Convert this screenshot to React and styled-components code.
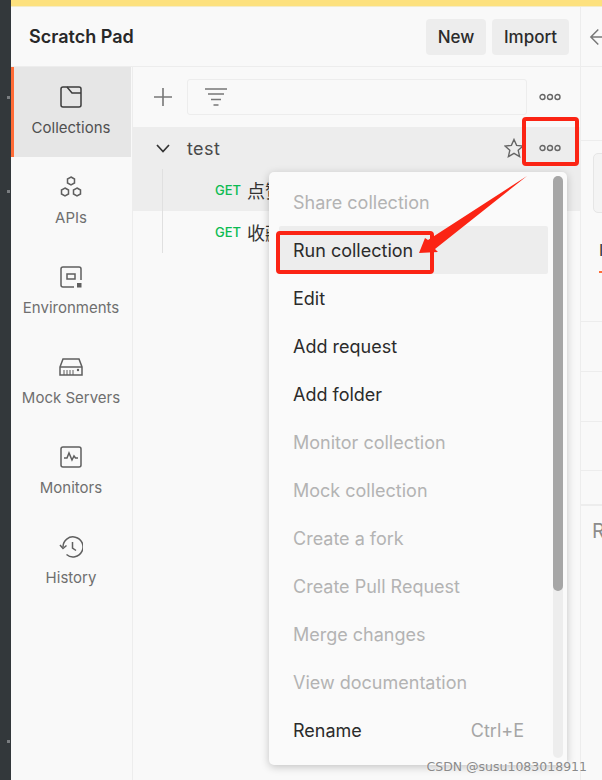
import React from "react";
import styled, { createGlobalStyle } from "styled-components";

const GlobalStyle = createGlobalStyle`
  html, body { margin: 0; padding: 0; background: #f9f9f9; }
  * { box-sizing: border-box; }
`;

const Page = styled.div`
  position: relative;
  width: 602px;
  height: 780px;
  overflow: hidden;
  display: grid;
  grid-template-columns: 11px 1fr;
  background: #f9f9f9;
  font-family: Inter, "Noto Sans CJK SC", sans-serif;
`;

const DarkStrip = styled.div`
  background: #33383b;
  position: relative;
`;

const StripTick = styled.span`
  position: absolute;
  left: 7px;
  top: ${(p) => p.$top}px;
  width: 3px;
  height: 3px;
  background: #7a7d80;
`;

const Main = styled.div`
  display: flex;
  flex-direction: column;
  min-width: 0;
`;

const Banner = styled.div`
  height: 7px;
  background: #fde17e;
  border-bottom: 1px solid #f4ecc8;
  flex: none;
`;

const Workspace = styled.div`
  flex: 1;
  display: grid;
  grid-template-columns: 570px 1fr;
  min-height: 0;
`;

const Sidebar = styled.div`
  display: flex;
  flex-direction: column;
  border-right: 1px solid #ededed;
`;

const Header = styled.div`
  height: 60px;
  flex: none;
  display: flex;
  align-items: center;
  padding: 0 11px 0 18px;
  gap: 6px;
  border-bottom: 1px solid #ededed;
`;

const Title = styled.div`
  font-size: 18px;
  font-weight: 600;
  color: #282828;
  margin-right: auto;
`;

const HeaderButton = styled.div`
  height: 36px;
  width: ${(p) => p.$width}px;
  display: flex;
  align-items: center;
  justify-content: center;
  border-radius: 4px;
  background: #ededed;
  color: #2b2b2b;
  font-size: 17px;
  font-weight: 500;
`;

const SidebarBody = styled.div`
  flex: 1;
  display: grid;
  grid-template-columns: 122px 1fr;
`;

const Nav = styled.div`
  border-right: 1px solid #ededed;
`;

const NavItem = styled.div`
  height: 90px;
  display: flex;
  flex-direction: column;
  align-items: center;
  padding: 19px 3px 0 0;
  gap: 11px;
  margin-right: 1px;
  font-size: 15px;
  line-height: 18px;
  color: ${(p) => (p.$active ? "#505050" : "#6f6f6f")};
  background: ${(p) => (p.$active ? "#e6e6e6" : "transparent")};
  border-left: 3px solid ${(p) => (p.$active ? "#ff6c37" : "transparent")};
`;

const IconSlot = styled.div`
  height: 22px;
  display: flex;
  align-items: center;
`;

const ListPane = styled.div`
  display: flex;
  flex-direction: column;
`;

const Toolbar = styled.div`
  height: 60px;
  display: flex;
  align-items: center;
  padding: 0 14px 0 20px;
`;

const FilterBox = styled.div`
  width: 340px;
  height: 36px;
  margin-left: 14px;
  margin-right: 12px;
  padding-left: 17px;
  display: flex;
  align-items: center;
  border: 1px solid #ededed;
  border-radius: 3px;
`;

const CollectionRow = styled.div`
  height: 42px;
  display: flex;
  align-items: center;
  padding: 0 19px 0 23px;
  background: #ededed;
  color: #4a4a4a;
  font-size: 18px;
`;

const CollectionName = styled.span`
  margin-left: 17px;
  margin-right: auto;
  letter-spacing: 0.4px;
`;

const StarSlot = styled.span`
  display: flex;
  margin-right: 15px;
`;

const Requests = styled.div`
  position: relative;
`;

const TreeLine = styled.div`
  position: absolute;
  left: 29px;
  top: 0;
  height: 84px;
  width: 1px;
  background: #e0e0e0;
`;

const RequestRow = styled.div`
  height: 42px;
  display: flex;
  align-items: center;
  gap: 6px;
  padding-left: 82px;
  background: ${(p) => (p.$hover ? "#ededed" : "transparent")};
`;

const Method = styled.span`
  color: #0cbb52;
  font-size: 13px;
  font-weight: 500;
`;

const RequestName = styled.span`
  color: #333;
  font-size: 18px;
`;

const RightPane = styled.div`
  display: flex;
  flex-direction: column;
  overflow: hidden;
`;

const RightBlock = styled.div`
  height: ${(p) => p.$height}px;
  flex: none;
  border-bottom: ${(p) => p.$line ?? 1}px solid #ededed;
  padding-left: ${(p) => p.$pad || 0}px;
  display: flex;
  align-items: ${(p) => p.$align || "center"};
  color: ${(p) => p.$color || "#2b2b2b"};
  font-size: 20px;
`;

const Card = styled.div`
  width: 30px;
  height: 60px;
  margin-top: 12px;
  border: 1px solid #e6e6e6;
  border-radius: 5px;
  background: #f4f4f4;
`;

const TabStub = styled.div`
  line-height: 20px;
  color: #333;
  font-size: 16px;
  margin: 27px 0 0 6px;
`;

const TabMark = styled.div`
  height: 2px;
  width: 20px;
  margin-top: 11px;
  background: #ff6c37;
`;

const Menu = styled.div`
  position: absolute;
  left: 269px;
  top: 172px;
  width: 298px;
  height: 593px;
  background: #fafafa;
  border-radius: 5px;
  box-shadow: 0 2px 8px rgba(0, 0, 0, 0.22);
  padding: 6px 19px 0 10px;
`;

const MenuItem = styled.div`
  height: 48px;
  display: flex;
  align-items: center;
  justify-content: space-between;
  padding: 0 24px 0 14px;
  font-size: 18px;
  border-radius: 2px;
  color: ${(p) => (p.$disabled ? "#b3b3b3" : "#2b2b2b")};
  background: ${(p) => (p.$hover ? "#ededed" : "transparent")};
`;

const Shortcut = styled.span`
  color: #a6a6a6;
`;

const ScrollTrack = styled.div`
  position: absolute;
  right: 4px;
  top: 4px;
  bottom: 7px;
  width: 10px;
  border-radius: 5px;
  background: #ededed;
`;

const ScrollThumb = styled.div`
  height: 415px;
  border-radius: 5px;
  background: #a6a6a6;
`;

// the red annotations drawn on top of the screenshot
const RedBox = styled.div`
  position: absolute;
  left: ${(p) => p.$x}px;
  top: ${(p) => p.$y}px;
  width: ${(p) => p.$w}px;
  height: ${(p) => p.$h}px;
  border: 4px solid #fb2414;
  border-radius: 4px;
`;

const ArrowSvg = styled.svg`
  position: absolute;
  left: 0;
  top: 0;
`;

const Watermark = styled.div`
  position: absolute;
  right: 15px;
  bottom: 6px;
  font-family: "DejaVu Sans", sans-serif;
  font-size: 12.5px;
  color: #8a8a8a;
  text-shadow: 0 0 2px #fff;
`;

const stroke = { fill: "none", stroke: "#5f5f5f", strokeWidth: 1.5 };

const CollectionsIcon = () => (
  <svg width="22" height="22" viewBox="0 0 22 22" {...stroke} stroke="#3c3c3c">
    <rect x="1" y="1" width="20" height="20" rx="2" />
    <path d="M7 1 L12 7 H21" />
  </svg>
);

const ApisIcon = () => (
  <svg width="22" height="22" viewBox="0 0 22 22" {...stroke}>
    <path d="M11 1 L14.5 3 V7 L11 9 L7.500 7 V3 Z" />
    <path d="M5 12 L8.500 14 V18 L5 20 L1.500 18 V14 Z" />
    <path d="M17 12 L20.500 14 V18 L17 20 L13.500 18 V14 Z" />
  </svg>
);

const EnvironmentsIcon = () => (
  <svg width="22" height="22" viewBox="0 0 22 22" {...stroke}>
    <path d="M21 14 V3 a2 2 0 0 0 -2 -2 H3 a2 2 0 0 0 -2 2 V19 a2 2 0 0 0 2 2 H14" />
    <rect x="7" y="8" width="8" height="5" />
    <rect x="17" y="17" width="4.500" height="4.500" fill="#5f5f5f" stroke="none" />
  </svg>
);

const MockIcon = () => (
  <svg width="24" height="18" viewBox="0 0 24 18" {...stroke}>
    <path d="M1 9 L4 1 H20 L23 9 V17 H1 Z" />
    <path d="M1 9 H23" />
    <path d="M5 12 V17 M8 12 V17 M11 12 V17 M14 12 V17" strokeWidth="1" />
    <circle cx="19" cy="12" r="1.200" fill="#5f5f5f" stroke="none" />
  </svg>
);

const MonitorsIcon = () => (
  <svg width="22" height="22" viewBox="0 0 22 22" {...stroke}>
    <rect x="1" y="1" width="20" height="20" rx="2" />
    <path d="M4 12 H7 L9 7 L12 14 L14 10 L15.500 12 H18" />
  </svg>
);

const HistoryIcon = () => (
  <svg width="24" height="22" viewBox="0 0 24 22" {...stroke}>
    <path d="M4 11 A10 10 0 1 1 7.500 18.500" />
    <path d="M1 9 L4 12.500 L7.500 9.500" />
    <path d="M13.500 6 V12 L17 14.500" />
  </svg>
);

const PlusIcon = () => (
  <svg width="20" height="20" viewBox="0 0 20 20" fill="none" stroke="#777" strokeWidth="1.600">
    <path d="M10 1 V19 M1 10 H19" />
  </svg>
);

const FilterIcon = () => (
  <svg width="22" height="18" viewBox="0 0 22 18" fill="none" stroke="#777" strokeWidth="1.500">
    <path d="M0 1 H22 M3 6 H19 M6 11.500 H16 M8.500 17 H13.500" />
  </svg>
);

const DotsIcon = () => (
  <svg width="22" height="8" viewBox="0 0 22 8" fill="none" stroke="#666" strokeWidth="1.400">
    <circle cx="3.500" cy="4" r="2.500" />
    <circle cx="11" cy="4" r="2.500" />
    <circle cx="18.500" cy="4" r="2.500" />
  </svg>
);

const ChevronIcon = () => (
  <svg width="14" height="9" viewBox="0 0 14 9" fill="none" stroke="#333" strokeWidth="1.700">
    <path d="M1 1 L7 7.500 L13 1" />
  </svg>
);

const StarIcon = () => (
  <svg width="20" height="20" viewBox="0 0 20 20" fill="none" stroke="#666" strokeWidth="1.400">
    <path d="M10 1.500 L12.600 7.400 L19 8 L14.200 12.300 L15.600 18.600 L10 15.300 L4.400 18.600 L5.800 12.300 L1 8 L7.400 7.400 Z" />
  </svg>
);

const BackIcon = () => (
  <svg width="14" height="20" viewBox="0 0 14 20" fill="none" stroke="#777" strokeWidth="1.600">
    <path d="M10 2 L2 10 L10 18 M2 10 H21" />
  </svg>
);

const navItems = [
  { label: "Collections", Icon: CollectionsIcon, active: true },
  { label: "APIs", Icon: ApisIcon },
  { label: "Environments", Icon: EnvironmentsIcon },
  { label: "Mock Servers", Icon: MockIcon },
  { label: "Monitors", Icon: MonitorsIcon },
  { label: "History", Icon: HistoryIcon },
];

const menuItems = [
  { label: "Share collection", disabled: true },
  { label: "Run collection", hover: true },
  { label: "Edit" },
  { label: "Add request" },
  { label: "Add folder" },
  { label: "Monitor collection", disabled: true },
  { label: "Mock collection", disabled: true },
  { label: "Create a fork", disabled: true },
  { label: "Create Pull Request", disabled: true },
  { label: "Merge changes", disabled: true },
  { label: "View documentation", disabled: true },
  { label: "Rename", shortcut: "Ctrl+E" },
];

export default function App() {
  return (
    <>
      <GlobalStyle />
      <Page>
        <DarkStrip>
          <StripTick $top={96} />
          <StripTick $top={190} />
          <StripTick $top={740} />
        </DarkStrip>
        <Main>
          <Banner />
          <Workspace>
            <Sidebar>
              <Header>
                <Title>Scratch Pad</Title>
                <HeaderButton $width={60}>New</HeaderButton>
                <HeaderButton $width={77}>Import</HeaderButton>
              </Header>
              <SidebarBody>
                <Nav>
                  {navItems.map(({ label, Icon, active }) => (
                    <NavItem key={label} $active={active}>
                      <IconSlot>
                        <Icon />
                      </IconSlot>
                      {label}
                    </NavItem>
                  ))}
                </Nav>
                <ListPane>
                  <Toolbar>
                    <PlusIcon />
                    <FilterBox>
                      <FilterIcon />
                    </FilterBox>
                    <DotsIcon />
                  </Toolbar>
                  <CollectionRow>
                    <ChevronIcon />
                    <CollectionName>test</CollectionName>
                    <StarSlot>
                      <StarIcon />
                    </StarSlot>
                    <DotsIcon />
                  </CollectionRow>
                  <Requests>
                    <TreeLine />
                    <RequestRow $hover>
                      <Method>GET</Method>
                      <RequestName>点赞</RequestName>
                    </RequestRow>
                    <RequestRow>
                      <Method>GET</Method>
                      <RequestName>收藏</RequestName>
                    </RequestRow>
                  </Requests>
                </ListPane>
              </SidebarBody>
            </Sidebar>
            <RightPane>
              <RightBlock $height={60} $pad={8}>
                <BackIcon />
              </RightBlock>
              <RightBlock $height={74} />
              <RightBlock $height={181} $pad={12} $align="flex-start">
                <div>
                  <Card />
                  <TabStub>
                    I<TabMark />
                  </TabStub>
                </div>
              </RightBlock>
              <RightBlock $height={50} />
              <RightBlock $height={50} />
              <RightBlock $height={49} />
              <RightBlock $height={35} $line={2} />
              <RightBlock $height={50} $pad={11} $color="#8c8c8c" $line={0}>R</RightBlock>
            </RightPane>
          </Workspace>
        </Main>

        <Menu>
          {menuItems.map((item) => (
            <MenuItem key={item.label} $disabled={item.disabled} $hover={item.hover}>
              {item.label}
              {item.shortcut && <Shortcut>{item.shortcut}</Shortcut>}
            </MenuItem>
          ))}
          <ScrollTrack>
            <ScrollThumb />
          </ScrollTrack>
        </Menu>

        <RedBox $x={522} $y={117} $w={57} $h={49} />
        <RedBox $x={276} $y={231} $w={158} $h={43} />
        <ArrowSvg width="602" height="780" viewBox="0 0 602 780">
          <polygon points="527,176 435,249 438,252 419,253 425,238 428,240" fill="#fb2414" />
        </ArrowSvg>
        <Watermark>CSDN @susu1083018911</Watermark>
      </Page>
    </>
  );
}
